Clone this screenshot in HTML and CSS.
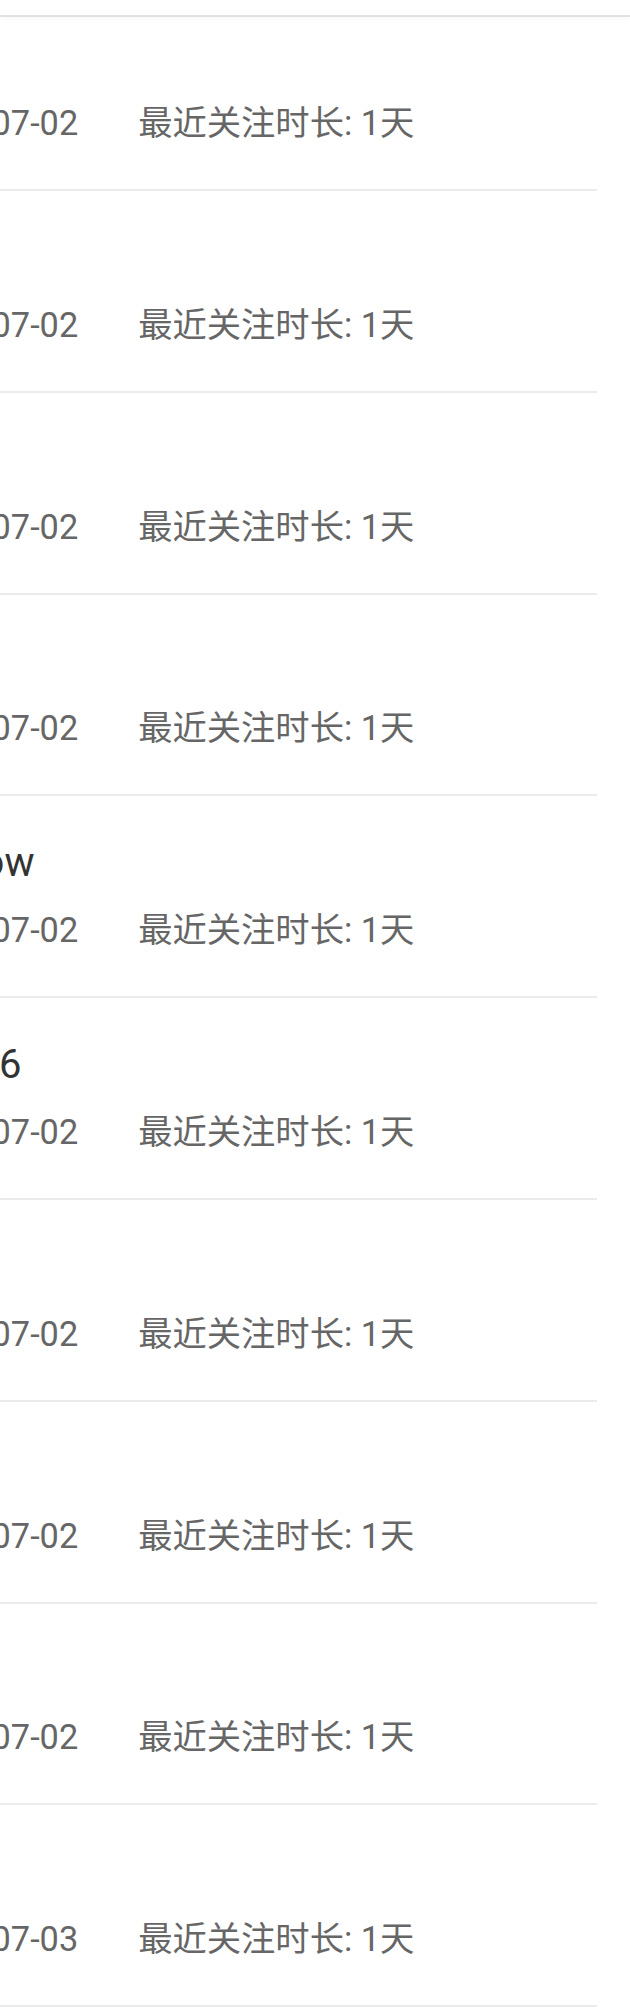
FILE: index.html
```html
<!DOCTYPE html>
<html lang="zh-CN">
<head>
    <meta charset="UTF-8">
    <title>关注列表</title>
    <link rel="stylesheet" href="styles.css">
</head>
<body>
    <div class="topbar"></div>
    <ul class="follow-list">
        <li class="follow-item">
            <div class="follow-name">小雨</div>
            <div class="follow-meta"><span class="follow-date">2020-07-02</span><span class="follow-time">最近关注时长: 1天</span></div>
        </li>
        <li class="follow-item">
            <div class="follow-name">阿杰</div>
            <div class="follow-meta"><span class="follow-date">2020-07-02</span><span class="follow-time">最近关注时长: 1天</span></div>
        </li>
        <li class="follow-item">
            <div class="follow-name">木子</div>
            <div class="follow-meta"><span class="follow-date">2020-07-02</span><span class="follow-time">最近关注时长: 1天</span></div>
        </li>
        <li class="follow-item">
            <div class="follow-name">晴天</div>
            <div class="follow-meta"><span class="follow-date">2020-07-02</span><span class="follow-time">最近关注时长: 1天</span></div>
        </li>
        <li class="follow-item">
            <div class="follow-name">Mellow</div>
            <div class="follow-meta"><span class="follow-date">2020-07-02</span><span class="follow-time">最近关注时长: 1天</span></div>
        </li>
        <li class="follow-item">
            <div class="follow-name">Uber 6</div>
            <div class="follow-meta"><span class="follow-date">2020-07-02</span><span class="follow-time">最近关注时长: 1天</span></div>
        </li>
        <li class="follow-item">
            <div class="follow-name">老王</div>
            <div class="follow-meta"><span class="follow-date">2020-07-02</span><span class="follow-time">最近关注时长: 1天</span></div>
        </li>
        <li class="follow-item">
            <div class="follow-name">星星</div>
            <div class="follow-meta"><span class="follow-date">2020-07-02</span><span class="follow-time">最近关注时长: 1天</span></div>
        </li>
        <li class="follow-item">
            <div class="follow-name">一一</div>
            <div class="follow-meta"><span class="follow-date">2020-07-02</span><span class="follow-time">最近关注时长: 1天</span></div>
        </li>
        <li class="follow-item">
            <div class="follow-name">小七</div>
            <div class="follow-meta"><span class="follow-date">2020-07-03</span><span class="follow-time">最近关注时长: 1天</span></div>
        </li>
        <li class="follow-item">
            <div class="follow-name">大白</div>
            <div class="follow-meta"><span class="follow-date">2020-07-03</span><span class="follow-time">最近关注时长: 1天</span></div>
        </li>
    </ul>
</body>
</html>
```

FILE: styles.css
```css
body {
    margin: 0;
    background: #fff;
    font-family: Roboto, "Noto Sans CJK SC", sans-serif;
}
.topbar {
    position: fixed;
    top: 0;
    left: 0;
    right: 0;
    height: 15px;
    background: #fff;
    border-bottom: 2px solid #e2e2e2;
    box-shadow: 0 2px 6px rgba(0, 0, 0, 0.03);
    z-index: 1;
}
.follow-list {
    list-style: none;
    margin: -10.8px 33px 0 -95px;
    padding: 0;
}
.follow-item {
    box-sizing: border-box;
    height: 201.8px;
    padding-top: 42.8px;
    border-bottom: 2px solid #ebebeb;
}
.follow-name {
    margin-left: 1px;
    font-size: 40px;
    line-height: 48px;
    color: #333;
    white-space: nowrap;
}
.follow-meta {
    display: flex;
    margin-top: 23.1px;
    font-size: 34.3px;
    line-height: 40px;
    color: #666;
    white-space: nowrap;
}
.follow-time {
    margin-left: 60px;
}
```
